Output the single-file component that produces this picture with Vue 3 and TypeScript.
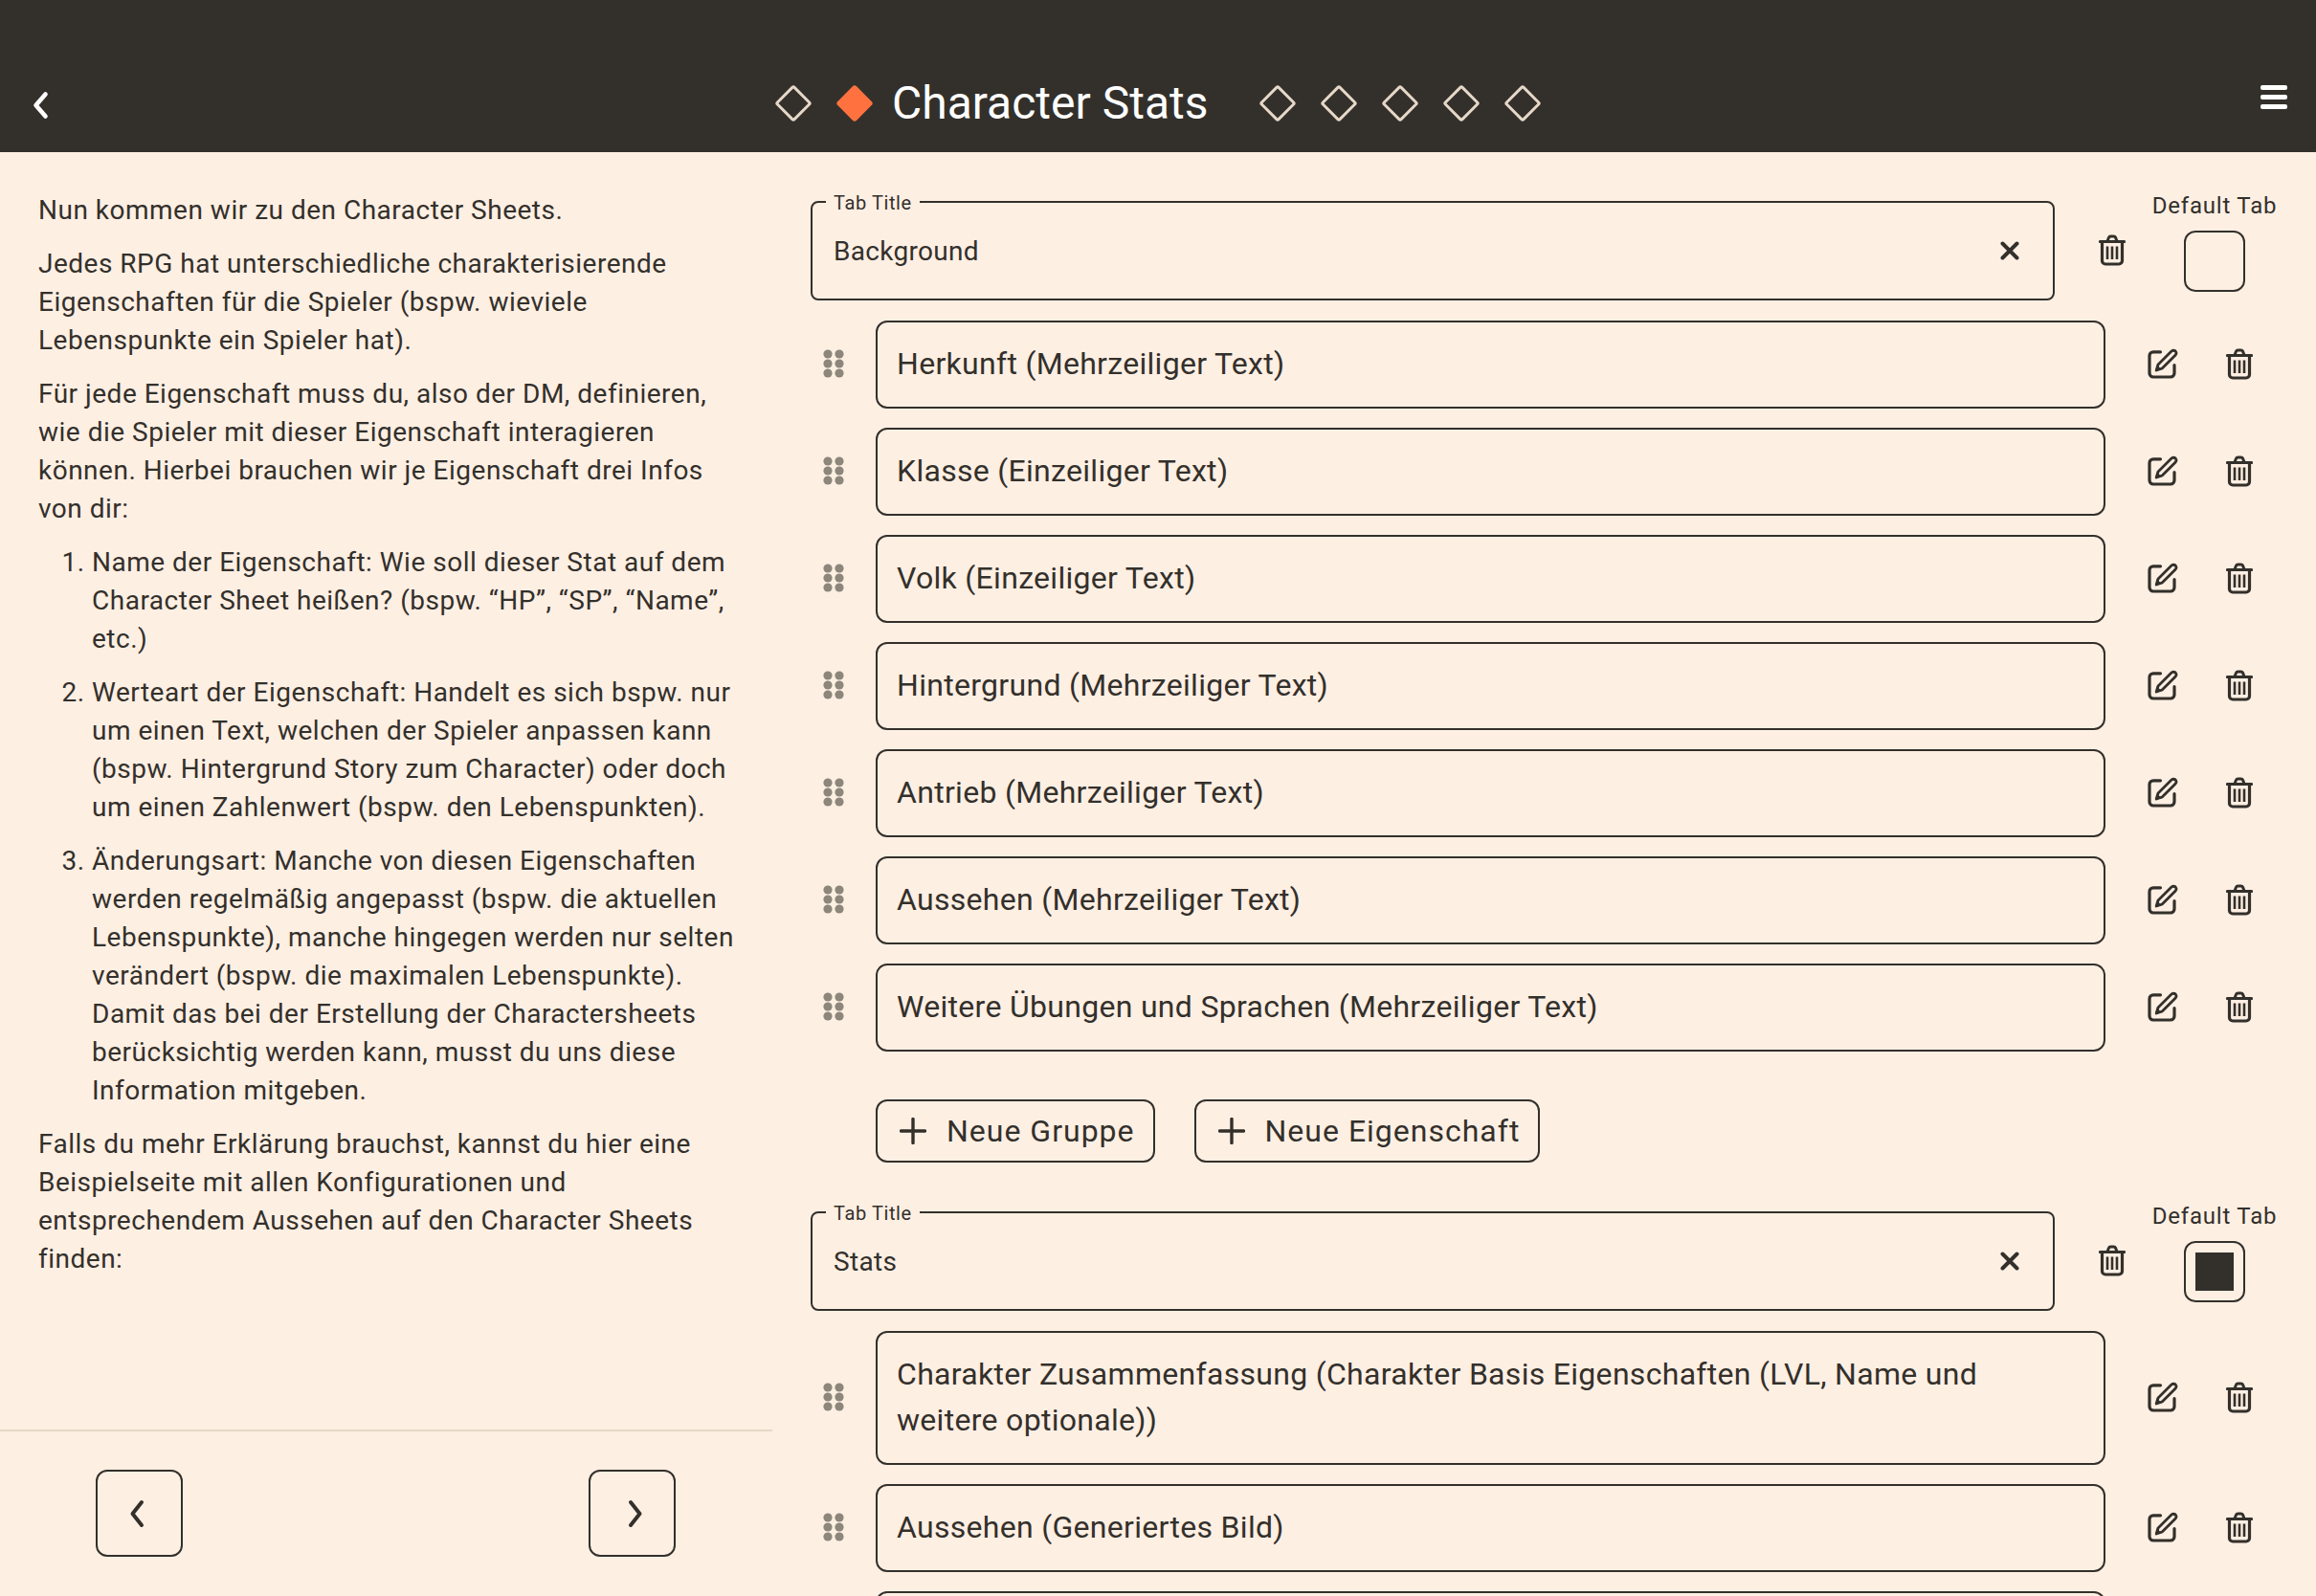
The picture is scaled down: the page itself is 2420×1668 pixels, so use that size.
<script setup lang="ts">
interface Tab {
  title: string
  isDefault: boolean
  rows: string[]
  showAdd: boolean
}

const stepsBefore: number[] = [1]
const stepsAfter: number[] = [1, 2, 3, 4, 5]

const tabs: Tab[] = [
  {
    title: 'Background',
    isDefault: false,
    showAdd: true,
    rows: [
      'Herkunft (Mehrzeiliger Text)',
      'Klasse (Einzeiliger Text)',
      'Volk (Einzeiliger Text)',
      'Hintergrund (Mehrzeiliger Text)',
      'Antrieb (Mehrzeiliger Text)',
      'Aussehen (Mehrzeiliger Text)',
      'Weitere Übungen und Sprachen (Mehrzeiliger Text)',
    ],
  },
  {
    title: 'Stats',
    isDefault: true,
    showAdd: false,
    rows: [
      'Charakter Zusammenfassung (Charakter Basis Eigenschaften (LVL, Name und weitere optionale))',
      'Aussehen (Generiertes Bild)',
      '',
    ],
  },
]
</script>

<template>
  <div class="page">
    <svg class="defs" aria-hidden="true">
      <symbol id="trash" viewBox="0 0 28 33">
        <path d="M1.5 7.5H26.5" fill="none" stroke="currentColor" stroke-width="3.2" stroke-linecap="round" />
        <path d="M9 7L10.5 3.2Q11 2 12.5 2H15.5Q17 2 17.5 3.2L19 7" fill="none" stroke="currentColor" stroke-width="3" />
        <path d="M3.5 8V27.5A3.5 3.5 0 0 0 7 31H21A3.5 3.5 0 0 0 24.5 27.5V8" fill="none" stroke="currentColor" stroke-width="3.2" />
        <path d="M9 12.5V26M14 12.5V26M19 12.5V26" fill="none" stroke="currentColor" stroke-width="2.6" />
      </symbol>
      <symbol id="edit" viewBox="0 0 32 32">
        <path d="M13.5 3.8H6A4 4 0 0 0 2 7.8V26A4 4 0 0 0 6 30H24A4 4 0 0 0 28 26V17.5" fill="none" stroke="currentColor" stroke-width="3.2" stroke-linecap="round" />
        <path d="M9.2 23L11 17L25 3Q27 1.4 29.2 3Q30.8 5 29.2 7L15.2 21Z" fill="none" stroke="currentColor" stroke-width="2.8" stroke-linejoin="round" />
        <path d="M8 24.2L10 17.5L14.8 22.2Z" fill="currentColor" />
      </symbol>
      <symbol id="grip" viewBox="0 0 22 30">
        <circle cx="5" cy="5" r="4.6" />
        <circle cx="17" cy="5" r="4.6" />
        <circle cx="5" cy="15" r="4.6" />
        <circle cx="17" cy="15" r="4.6" />
        <circle cx="5" cy="25" r="4.6" />
        <circle cx="17" cy="25" r="4.6" />
      </symbol>
      <symbol id="plus" viewBox="0 0 28 28">
        <path d="M14 1.5V26.5M1.5 14H26.5" fill="none" stroke="currentColor" stroke-width="3.4" stroke-linecap="round" />
      </symbol>
    </svg>

    <header class="header">
      <button class="head-btn back" type="button" aria-label="Zurück">
        <svg width="20" height="30" viewBox="0 0 20 30">
          <path d="M15.5 3.5L5.5 15L15.5 26.5" fill="none" stroke="#fff" stroke-width="4.6" stroke-linecap="round" stroke-linejoin="round" />
        </svg>
      </button>
      <div class="steps">
        <span v-for="s in stepsBefore" :key="'b' + s" class="diamond"></span>
        <span class="diamond active"></span>
        <h1 class="title">Character Stats</h1>
        <div class="steps-after">
          <span v-for="s in stepsAfter" :key="'a' + s" class="diamond"></span>
        </div>
      </div>
      <button class="head-btn menu" type="button" aria-label="Menü">
        <span></span><span></span><span></span>
      </button>
    </header>

    <main class="main">
      <aside class="left">
        <div class="copy">
          <p>Nun kommen wir zu den Character Sheets.</p>
          <p>Jedes RPG hat unterschiedliche charakterisierende Eigenschaften für die Spieler (bspw. wieviele Lebenspunkte ein Spieler hat).</p>
          <p>Für jede Eigenschaft muss du, also der DM, definieren, wie die Spieler mit dieser Eigenschaft interagieren können. Hierbei brauchen wir je Eigenschaft drei Infos von dir:</p>
          <ol>
            <li>Name der Eigenschaft: Wie soll dieser Stat auf dem Character Sheet heißen? (bspw. “HP”, “SP”, “Name”, etc.)</li>
            <li>Werteart der Eigenschaft: Handelt es sich bspw. nur um einen Text, welchen der Spieler anpassen kann (bspw. Hintergrund Story zum Character) oder doch um einen Zahlenwert (bspw. den Lebenspunkten).</li>
            <li>Änderungsart: Manche von diesen Eigenschaften werden regelmäßig angepasst (bspw. die aktuellen Lebenspunkte), manche hingegen werden nur selten verändert (bspw. die maximalen Lebenspunkte). Damit das bei der Erstellung der Charactersheets berücksichtig werden kann, musst du uns diese Information mitgeben.</li>
          </ol>
          <p>Falls du mehr Erklärung brauchst, kannst du hier eine Beispielseite mit allen Konfigurationen und entsprechendem Aussehen auf den Character Sheets finden:</p>
        </div>
        <div class="pager">
          <button class="page-btn" type="button" aria-label="Zurück">
            <svg width="22" height="30" viewBox="0 0 22 30">
              <path d="M15 3L5.5 15L15 27" fill="none" stroke="currentColor" stroke-width="4" stroke-linecap="round" stroke-linejoin="round" />
            </svg>
          </button>
          <button class="page-btn" type="button" aria-label="Weiter">
            <svg class="next" width="22" height="30" viewBox="0 0 22 30">
              <path d="M7 3L16.5 15L7 27" fill="none" stroke="currentColor" stroke-width="4" stroke-linecap="round" stroke-linejoin="round" />
            </svg>
          </button>
        </div>
      </aside>

      <section class="right">
        <div v-for="tab in tabs" :key="tab.title" class="tab">
          <div class="tab-head">
            <div class="field">
              <span class="legend">Tab Title</span>
              <span class="field-value">{{ tab.title }}</span>
              <svg class="clear" width="20" height="20" viewBox="0 0 20 20">
                <path d="M2.5 2.5L17.5 17.5M17.5 2.5L2.5 17.5" fill="none" stroke="currentColor" stroke-width="4" stroke-linecap="round" />
              </svg>
            </div>
            <svg class="icon tab-trash"><use href="#trash" /></svg>
            <div class="default">
              <span class="default-label">Default Tab</span>
              <span class="check"><span v-if="tab.isDefault" class="check-fill"></span></span>
            </div>
          </div>

          <div v-for="(row, i) in tab.rows" :key="i" class="row">
            <svg class="grip"><use href="#grip" /></svg>
            <div class="row-box">{{ row }}</div>
            <svg class="icon edit"><use href="#edit" /></svg>
            <svg class="icon trash"><use href="#trash" /></svg>
          </div>

          <div v-if="tab.showAdd" class="actions">
            <button class="add" type="button"><svg class="plus"><use href="#plus" /></svg>Neue Gruppe</button>
            <button class="add" type="button"><svg class="plus"><use href="#plus" /></svg>Neue Eigenschaft</button>
          </div>
        </div>
      </section>
    </main>
  </div>
</template>

<style>
html, body { margin: 0; background: #feefe3; }
</style>

<style scoped>
.page {
  width: 2420px;
  height: 1668px;
  overflow: hidden;
  display: flex;
  flex-direction: column;
  background: #feefe3;
  color: #33302b;
  font-family: Roboto, "Liberation Sans", sans-serif;
}
.defs { position: absolute; width: 0; height: 0; }
button { font: inherit; color: inherit; background: none; padding: 0; cursor: pointer; }

.header {
  height: 159px;
  flex: none;
  box-sizing: border-box;
  background: #33302b;
  position: relative;
  display: flex;
  padding: 80px 0 0 815px;
}
.head-btn { border: 0; position: absolute; }
.back { left: 32px; top: 95px; line-height: 0; }
.menu { right: 30px; top: 89px; width: 28px; height: 25px; display: flex; flex-direction: column; justify-content: space-between; }
.menu span { display: block; height: 5px; background: #fff; border-radius: 2px; }
.steps { display: flex; align-items: center; height: 56px; }
.steps-after { display: flex; gap: 36px; margin-left: 59px; }
.diamond {
  display: block;
  width: 28px;
  height: 28px;
  margin-bottom: 1px;
  box-sizing: border-box;
  border: 3px solid #e6d8c8;
  border-radius: 3px;
  transform: rotate(45deg);
}
.diamond.active { background: #ff7240; border-color: #ff7240; margin-left: 36px; }
.title {
  margin: 0 0 0 25px;
  font-size: 48px;
  font-weight: 400;
  line-height: 56px;
  color: #fff;
  white-space: nowrap;
}

.main { flex: 1; display: flex; min-height: 0; }
.left {
  width: 807px;
  flex: none;
  display: flex;
  flex-direction: column;
}
.copy {
  flex: 1;
  padding: 41px 34px 0 40px;
  font-size: 28px;
  line-height: 40px;
  letter-spacing: 0.5px;
}
.copy p { margin: 0 0 16px; }
.copy ol { margin: 0 0 16px; padding: 0 0 0 56px; }
.copy li { margin-bottom: 16px; }
.pager {
  height: 174px;
  flex: none;
  box-sizing: border-box;
  border-top: 2px solid #e6d8c6;
  display: flex;
  justify-content: space-between;
  padding: 40px 101px 0 100px;
}
.page-btn {
  width: 91px;
  height: 91px;
  box-sizing: border-box;
  border: 2px solid #33302b;
  border-radius: 12px;
  display: flex;
  align-items: center;
  justify-content: center;
}
.page-btn svg { transform: translateX(-2px); }
.page-btn svg.next { transform: translateX(2px); }

.right { flex: 1; padding: 51px 0 0 40px; min-width: 0; }
.tab-head { display: flex; align-items: flex-start; height: 104px; margin-bottom: 21px; }
.field {
  width: 1300px;
  height: 104px;
  flex: none;
  box-sizing: border-box;
  border: 2px solid #33302b;
  border-radius: 8px;
  position: relative;
  display: flex;
  align-items: center;
  padding: 0 22px;
  font-size: 28px;
  letter-spacing: 0.3px;
}
.legend {
  position: absolute;
  left: 14px;
  top: -11px;
  padding: 0 8px;
  background: #feefe3;
  font-size: 20px;
  line-height: 22px;
  letter-spacing: 0.6px;
}
.field-value { flex: 1; }
.clear { margin-right: 13px; }
.icon { color: #33302b; flex: none; }
.tab-trash { width: 28px; height: 33px; margin: 35px 0 0 46px; }
.default { width: 150px; margin: -9px 0 0 18px; display: flex; flex-direction: column; align-items: center; }
.default-label { font-size: 24px; line-height: 28px; letter-spacing: 0.8px; margin-bottom: 12px; white-space: nowrap; }
.check {
  width: 64px;
  height: 64px;
  box-sizing: border-box;
  border: 2px solid #33302b;
  border-radius: 12px;
  display: flex;
  align-items: center;
  justify-content: center;
}
.check-fill { width: 40px; height: 40px; background: #33302b; }

.row { display: flex; align-items: center; margin-bottom: 20px; }
.grip { width: 22px; height: 30px; flex: none; margin: 0 0 3px 13px; fill: #8c867b; }
.row-box {
  width: 1285px;
  flex: none;
  min-height: 92px;
  margin-left: 33px;
  box-sizing: border-box;
  border: 2px solid #33302b;
  border-radius: 12px;
  padding: 19px 22px 21px 20px;
  font-size: 32px;
  line-height: 48px;
  letter-spacing: 0.3px;
  display: flex;
  align-items: center;
}
.edit { width: 32px; height: 32px; margin: 0 0 2px 44px; }
.trash { width: 28px; height: 33px; margin: 0 0 2px 50px; }

.actions { display: flex; gap: 41px; margin: 50px 0 51px 68px; }
.add {
  height: 66px;
  box-sizing: border-box;
  border: 2px solid #33302b;
  border-radius: 12px;
  display: flex;
  align-items: center;
  padding: 0 19px 0 23px;
  font-size: 32px;
  letter-spacing: 1px;
}
.plus { width: 28px; height: 28px; margin-right: 21px; }
</style>
